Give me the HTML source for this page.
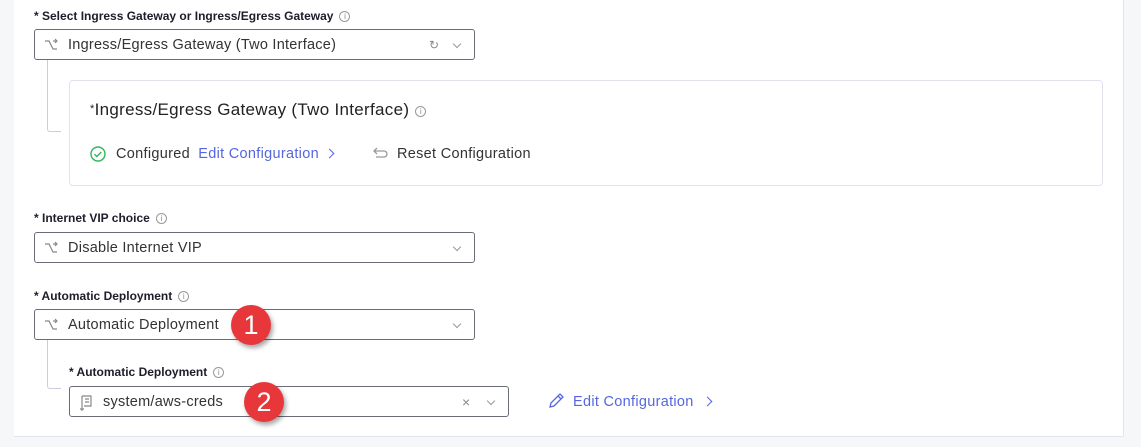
<!DOCTYPE html>
<html><head><meta charset="utf-8"><style>
*{margin:0;padding:0;box-sizing:border-box}
body{width:1141px;height:447px;background:#f6f7f9;font-family:"Liberation Sans",sans-serif;position:relative;overflow:hidden;color:#222}
.panel{position:absolute;left:14px;top:-2px;width:1110px;height:439px;background:#fff;border-right:1px solid #e4e4f0;border-bottom:1px solid #e4e4f0}
.a{position:absolute}
.lbl{font-size:12px;font-weight:bold;color:#1d1d2b}
.info{display:inline-block;width:11px;height:11px;border:1px solid #999;border-radius:50%;font-size:8px;line-height:9px;text-align:center;color:#888;font-weight:normal;vertical-align:1px;margin-left:6px;letter-spacing:0}
.sel{position:absolute;border:1px solid #6a6d78;border-radius:3px;background:#fff;height:31px;font-size:14.5px;letter-spacing:0.25px;color:#333;line-height:31px;padding-left:33px}
.sel svg.ic{position:absolute;left:9px;top:8px}
.chev{position:absolute;top:11px;width:6px;height:6px;border-right:1.3px solid #999;border-bottom:1.3px solid #999;transform:rotate(45deg)}
.badge{position:absolute;width:40px;height:40px;border-radius:50%;background:#e8373b;color:#fff;font-size:27px;text-align:center;line-height:40px;box-shadow:2px 3px 5px rgba(0,0,0,.35)}
.line{position:absolute;border-left:1px solid #ccd;border-bottom:1px solid #ccd;border-bottom-left-radius:3px}
.link{color:#5566e0}
.t{font-size:14.5px;letter-spacing:0.3px}
.gt{display:inline-block;width:7px;height:7px;border-right:1.4px solid #5566e0;border-top:1.4px solid #5566e0;transform:rotate(45deg);vertical-align:1px}
</style></head><body>
<div class="panel"></div>
<div class="a lbl" style="left:34px;top:9px">* Select Ingress Gateway or Ingress/Egress Gateway<span class="info">i</span></div>
<div class="line" style="left:47px;top:60px;width:14px;height:72px"></div>
<div class="sel" style="left:34px;top:29px;width:441px"><svg class="ic" width="14" height="14" viewBox="0 0 14 14" fill="none" stroke="#888" stroke-width="1.2"><path d="M1 3h4l4 8h4M9 3h4M11 1l2 2-2 2"/></svg>Ingress/Egress Gateway (Two Interface)<span style="position:absolute;left:394px;top:0;color:#888;font-size:12px">↻</span><span class="chev" style="left:419px"></span></div>
<div class="a" style="left:69px;top:80px;width:1034px;height:106px;border:1px solid #e2e2ee;border-radius:4px"></div>
<div class="a" style="left:90px;top:100px;font-size:17px;letter-spacing:0.3px;color:#222"><span style="font-size:11px;vertical-align:3px">*</span>Ingress/Egress Gateway (Two Interface)<span class="info">i</span></div>
<svg class="a" style="left:90px;top:146px" width="16" height="16" viewBox="0 0 16 16" fill="none" stroke="#2eb85c" stroke-width="1.4"><circle cx="8" cy="8" r="7"/><path d="M4.5 8.2l2.3 2.3 4.5-4.5"/></svg>
<div class="a t" style="left:116px;top:146px;color:#333">Configured <span class="link" style="margin-left:4px">Edit Configuration</span><span class="gt" style="margin-left:7px"></span></div>
<svg class="a" style="left:371px;top:145px" width="18" height="16" viewBox="0 0 18 16" fill="none" stroke="#999" stroke-width="1.3"><path d="M5 12h8a3 3 0 0 0 0-6H3M6 3L3 6l3 3"/></svg>
<div class="a t" style="left:397px;top:146px;color:#333">Reset Configuration</div>
<div class="a lbl" style="left:34px;top:211px">* Internet VIP choice<span class="info">i</span></div>
<div class="sel" style="left:34px;top:232px;width:441px"><svg class="ic" width="14" height="14" viewBox="0 0 14 14" fill="none" stroke="#888" stroke-width="1.2"><path d="M1 3h4l4 8h4M9 3h4M11 1l2 2-2 2"/></svg>Disable Internet VIP<span class="chev" style="left:419px"></span></div>
<div class="a lbl" style="left:34px;top:289px">* Automatic Deployment<span class="info">i</span></div>
<div class="line" style="left:47px;top:339px;width:14px;height:50px"></div>
<div class="sel" style="left:34px;top:309px;width:441px"><svg class="ic" width="14" height="14" viewBox="0 0 14 14" fill="none" stroke="#888" stroke-width="1.2"><path d="M1 3h4l4 8h4M9 3h4M11 1l2 2-2 2"/></svg>Automatic Deployment<span class="chev" style="left:419px"></span></div>
<div class="badge" style="left:231px;top:305px">1</div>
<div class="a lbl" style="left:69px;top:365px">* Automatic Deployment<span class="info">i</span></div>
<div class="sel" style="left:69px;top:386px;width:440px"><svg class="ic" width="14" height="16" viewBox="0 0 14 16" fill="none" stroke="#888" stroke-width="1.2"><path d="M3 1h9v10H5M3 1v11M6 4h4M6 7h4M1 14h4M3 12v4"/></svg>system/aws-creds<span style="position:absolute;left:392px;top:0;color:#888;font-size:14px">×</span><span class="chev" style="left:418px"></span></div>
<div class="badge" style="left:244px;top:382px">2</div>
<svg class="a" style="left:548px;top:392px" width="17" height="17" viewBox="0 0 17 17" fill="none" stroke="#5566e0" stroke-width="1.3"><path d="M2 15l1-4 9-9 3 3-9 9zM10 4l3 3"/></svg>
<div class="a link t" style="left:573px;top:394px">Edit Configuration<span class="gt" style="margin-left:10px"></span></div>
</body></html>
